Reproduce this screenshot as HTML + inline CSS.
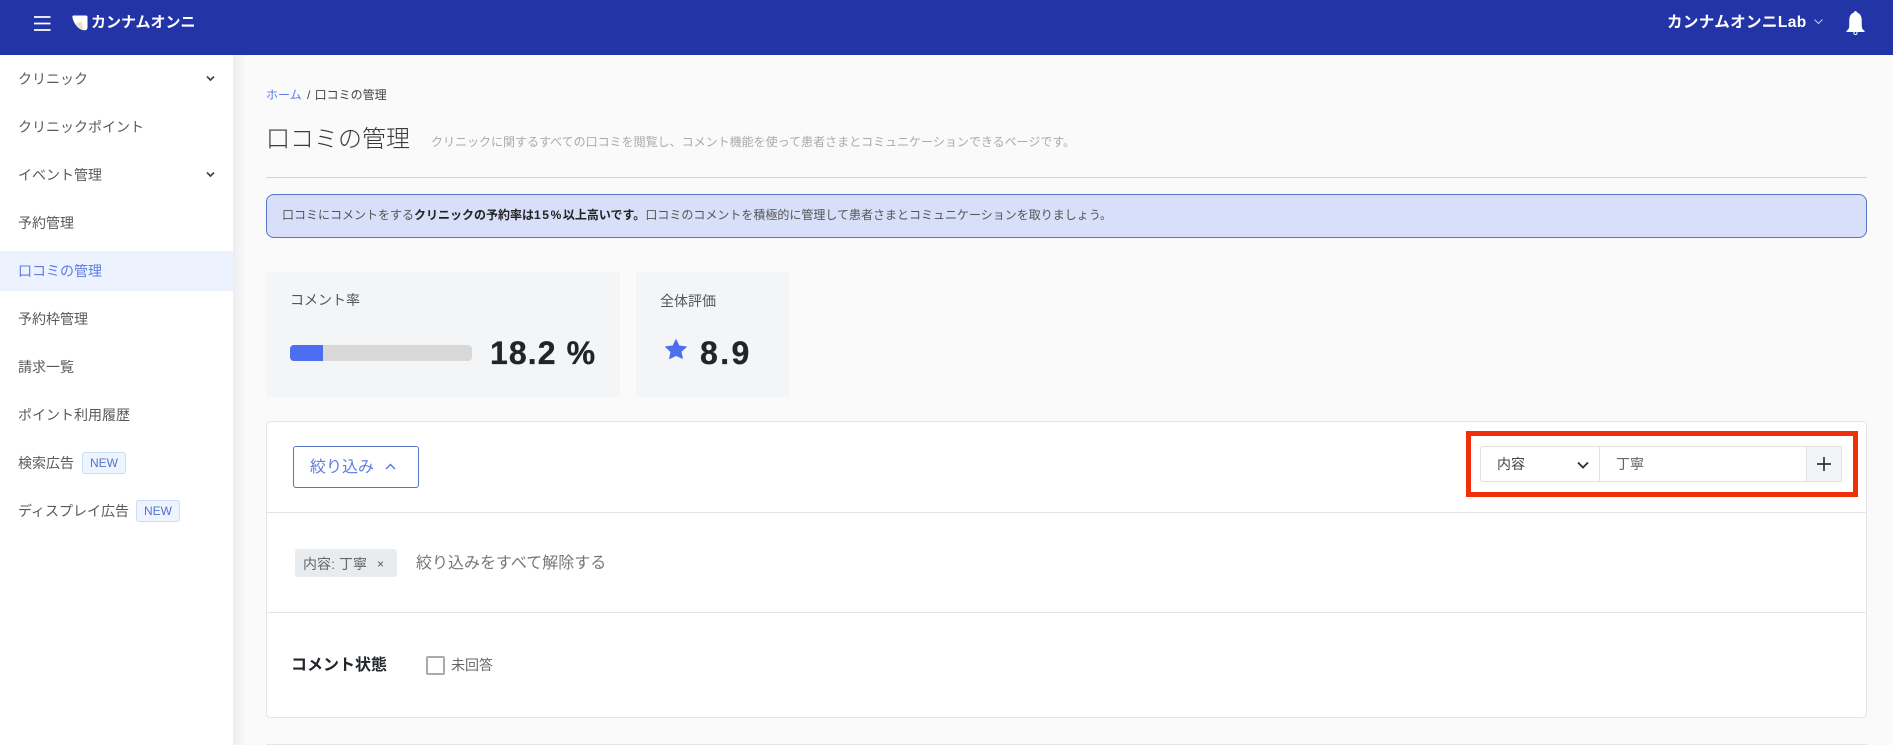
<!DOCTYPE html>
<html lang="ja">
<head>
<meta charset="utf-8">
<title>口コミの管理</title>
<style>
html,body{margin:0;padding:0;width:1893px;height:745px;overflow:hidden;background:#fafafb;}
body{font-family:"Liberation Sans","Noto Sans CJK JP",sans-serif;position:relative;color:#555;}
.a{position:absolute;white-space:nowrap;}
.t{position:absolute;white-space:nowrap;line-height:20px;height:20px;}
.nav{font-size:14px;color:#5a5a5a;left:18px;letter-spacing:0;}
b{font-weight:700;}
svg{position:absolute;display:block;}
</style>
</head>
<body>
<!-- header -->
<div class="a" style="left:0;top:0;width:1893px;height:55px;background:#2335a6;"></div>
<svg style="left:34px;top:16px" width="17" height="15" viewBox="0 0 17 15"><path d="M0 1h16.500M0 7.500h16.500M0 14h16.500" stroke="#fff" stroke-width="1.800" fill="none"/></svg>
<svg style="left:72px;top:15px" width="16" height="16" viewBox="0 0 16 16"><path d="M1.500 0.500H14a1.500 1.500 0 0 1 1.500 1.500V12.500q0 2.800-3 2.800C7 15.300 2 9 0.500 3Q0 .5 1.500 .5z" fill="#fff"/><path d="M4 8.500Q7 8 9 6q1.500 3 2 9C8 13.500 5.500 11 4 8.500z" fill="#f6dfae"/></svg>
<div class="t" style="left:91px;top:13px;font-size:15px;font-weight:700;color:#fff;">カンナムオンニ</div>
<div class="t" style="left:1667px;top:13px;font-size:15.500px;font-weight:700;color:#fff;letter-spacing:.4px;">カンナムオンニLab</div>
<svg style="left:1814px;top:19px" width="9" height="6" viewBox="0 0 9 6"><path d="M.5.500l4 4 4-4" stroke="#c8cfee" stroke-width="1" fill="none"/></svg>
<svg style="left:1846px;top:11px" width="19" height="24" viewBox="0 0 19 24"><path d="M9.500 0c.9 0 1.400.6 1.500 1.500 3 .9 4.600 3.700 4.700 7.200l.1 6.800c.1 2 1 3.300 2.700 4.200v1.300H.5v-1.300c1.700-.9 2.600-2.200 2.700-4.200l.1-6.800c.1-3.500 1.700-6.300 4.700-7.200C8.100.6 8.600 0 9.500 0z" fill="#fff"/><circle cx="9.500" cy="22" r="1.600" fill="none" stroke="#fff" stroke-width="1"/></svg>

<!-- sidebar -->
<div class="a" style="left:233px;top:55px;width:14px;height:690px;background:linear-gradient(90deg,#eeeeee,#fafafb);"></div>
<div class="a" style="left:0;top:55px;width:233px;height:690px;background:#fff;"></div>
<div class="a" style="left:0;top:251px;width:233px;height:40px;background:#edf3fe;"></div>
<div class="t nav" style="top:69px">クリニック</div>
<svg style="left:206px;top:75px" width="9" height="7" viewBox="0 0 9 7"><path d="M1 1.500l3.500 3.500 3.500-3.500" stroke="#444" stroke-width="1.700" fill="none"/></svg>
<div class="t nav" style="top:117px">クリニックポイント</div>
<div class="t nav" style="top:165px">イベント管理</div>
<svg style="left:206px;top:171px" width="9" height="7" viewBox="0 0 9 7"><path d="M1 1.500l3.500 3.500 3.500-3.500" stroke="#444" stroke-width="1.700" fill="none"/></svg>
<div class="t nav" style="top:213px">予約管理</div>
<div class="t nav" style="top:261px;color:#5c7ce0">口コミの管理</div>
<div class="t nav" style="top:309px">予約枠管理</div>
<div class="t nav" style="top:357px">請求一覧</div>
<div class="t nav" style="top:405px">ポイント利用履歴</div>
<div class="t nav" style="top:453px">検索広告</div>
<div class="a" style="left:82px;top:452px;width:42px;height:20px;box-sizing:content-box;background:#eef4fe;border:1px solid #cbdcf6;border-radius:3px;font-size:12px;line-height:20px;text-align:center;color:#5570d0;">NEW</div>
<div class="t nav" style="top:501px">ディスプレイ広告</div>
<div class="a" style="left:136px;top:500px;width:42px;height:20px;background:#eef4fe;border:1px solid #cbdcf6;border-radius:3px;font-size:12px;line-height:20px;text-align:center;color:#5570d0;">NEW</div>

<!-- breadcrumb & title -->
<div class="t" style="left:266px;top:85px;font-size:12px;color:#444;"><span style="color:#5c7ce0">ホーム</span><span style="margin:0 1px 0 2px"> / </span>口コミの管理</div>
<div class="a" style="left:266px;top:120px;font-size:24px;line-height:40px;color:#3a3a3a;font-weight:300;">口コミの管理</div>
<div class="t" style="left:431px;top:132px;font-size:12px;color:#aaa;">クリニックに関するすべての口コミを閲覧し、コメント機能を使って患者さまとコミュニケーションできるページです。</div>
<div class="a" style="left:266px;top:177px;width:1601px;height:1px;background:#d6d6d6;"></div>

<!-- alert -->
<div class="a" style="left:266px;top:194px;width:1599px;height:42px;background:#d8dff8;border:1px solid #5a75c8;border-radius:8px;"></div>
<div class="t" style="left:282px;top:205px;font-size:12px;color:#555;">口コミにコメントをする<b style="color:#222">クリニックの予約率は<span style="letter-spacing:1.600px">15%</span>以上高いです。</b>口コミのコメントを積極的に管理して患者さまとコミュニケーションを取りましょう。</div>

<!-- stat cards -->
<div class="a" style="left:266px;top:272px;width:354px;height:125px;background:#f3f5f7;"></div>
<div class="a" style="left:636px;top:272px;width:153px;height:125px;background:#f3f5f7;"></div>
<div class="t" style="left:290px;top:290px;font-size:14px;color:#555;">コメント率</div>
<div class="t" style="left:660px;top:291px;font-size:14px;color:#555;">全体評価</div>
<div class="a" style="left:290px;top:345px;width:182px;height:16px;background:#d8d8d8;border-radius:4px;overflow:hidden;"><div style="width:33px;height:16px;background:#4c6ef0;"></div></div>
<div class="a" style="left:490px;top:333px;font-size:32px;line-height:40px;font-weight:700;color:#212529;letter-spacing:1.100px;-webkit-text-stroke:.3px #212529;">18.2 %</div>
<div class="a" style="left:700px;top:333px;font-size:32px;line-height:40px;font-weight:700;color:#212529;letter-spacing:2.400px;-webkit-text-stroke:.3px #212529;">8.9</div>
<svg style="left:665px;top:339px" width="22" height="20" viewBox="0 0 24 22"><path d="M12 .8l3.400 6.800 8 1-5.900 5.200 1.600 7.400L12 18.100l-7.100 3.500 1.600-7.400L.6 8.600l8-1z" fill="#4c6ef0" stroke="#4c6ef0" stroke-linejoin="round"/></svg>

<!-- filter panel -->
<div class="a" style="left:266px;top:421px;width:1601px;height:297px;background:#fff;border:1px solid #e3e5e7;border-radius:4px;box-sizing:border-box;"></div>
<div class="a" style="left:267px;top:512px;width:1599px;height:1px;background:#e3e5e7;"></div>
<div class="a" style="left:267px;top:612px;width:1599px;height:1px;background:#e3e5e7;"></div>
<div class="a" style="left:266px;top:744px;width:1601px;height:1px;background:#e3e5e7;"></div>

<div class="a" style="left:293px;top:446px;width:124px;height:40px;border:1px solid #5a75c8;border-radius:3px;background:#fff;"></div>
<div class="t" style="left:310px;top:458px;font-size:16px;color:#5c7ce0;">絞り込み</div>
<svg style="left:385px;top:463px" width="11" height="8" viewBox="0 0 11 8"><path d="M1 6l4.500-4.500L10 6" stroke="#5c7ce0" stroke-width="1.500" fill="none"/></svg>

<!-- red highlighted input group -->
<div class="a" style="left:1466px;top:431px;width:392px;height:66px;box-sizing:border-box;border:5.500px solid #ee2f0a;"></div>
<div class="a" style="left:1480px;top:446px;width:362px;height:36px;box-sizing:border-box;border:1px solid #e0e2e4;border-radius:3px;background:#fff;"></div>
<div class="a" style="left:1599px;top:446px;width:1px;height:36px;background:#e0e2e4;"></div>
<div class="a" style="left:1806px;top:446px;width:36px;height:36px;box-sizing:border-box;border:1px solid #e0e2e4;background:#f2f4f6;"></div>
<div class="t" style="left:1497px;top:454px;font-size:14px;color:#444;">内容</div>
<svg style="left:1577px;top:461px" width="12" height="8" viewBox="0 0 12 8"><path d="M1 1.500l5 5 5-5" stroke="#333" stroke-width="1.900" fill="none"/></svg>
<div class="t" style="left:1616px;top:454px;font-size:14px;color:#666;">丁寧</div>
<svg style="left:1816px;top:456px" width="16" height="16" viewBox="0 0 16 16"><path d="M8 1v14M1 8h14" stroke="#333" stroke-width="1.700" fill="none"/></svg>

<!-- tag row -->
<div class="a" style="left:295px;top:549px;width:102px;height:28px;background:#e9ecef;border-radius:3px;"></div>
<div class="t" style="left:303px;top:554px;font-size:14px;color:#666;letter-spacing:.05px;">内容: 丁寧</div>
<div class="t" style="left:377px;top:554px;font-size:12px;color:#555;">×</div>
<div class="t" style="left:416px;top:554px;font-size:16px;color:#777;">絞り込みをすべて解除する</div>

<!-- comment state -->
<div class="t" style="left:291px;top:656px;font-size:16px;font-weight:700;color:#212529;">コメント状態</div>
<div class="a" style="left:426px;top:656px;width:19px;height:19px;box-sizing:border-box;border:2px solid #aaa;border-radius:2px;background:#fff;"></div>
<div class="t" style="left:451px;top:655px;font-size:14px;color:#666;">未回答</div>
</body>
</html>
